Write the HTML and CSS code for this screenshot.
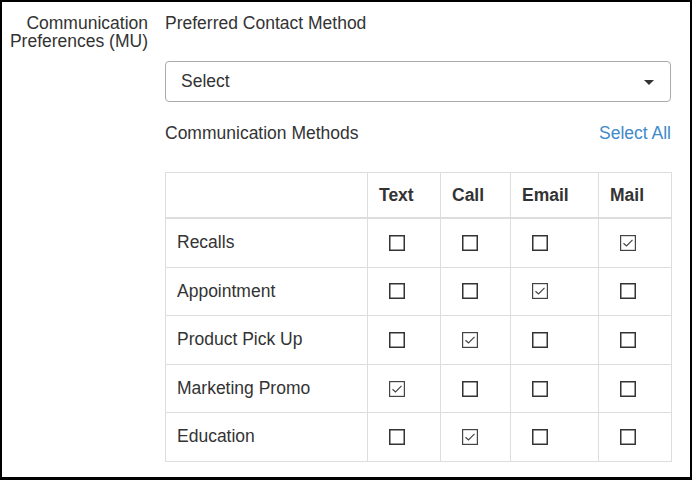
FILE: index.html
```html
<!DOCTYPE html>
<html lang="en">
<head>
<meta charset="utf-8">
<title>Communication Preferences</title>
<link rel="stylesheet" href="styles.css">
</head>
<body>
<div class="frame">
  <div class="form-row">
    <div class="row-label">Communication<br>Preferences (MU)</div>
    <div class="field">
      <div class="field-title">Preferred Contact Method</div>
      <div class="select">
        <span>Select</span>
        <span class="caret"></span>
      </div>
      <div class="methods-head">
        <span>Communication Methods</span>
        <a class="select-all" href="#">Select All</a>
      </div>
      <table class="methods">
        <colgroup>
          <col class="c-name"><col class="c-text"><col class="c-call"><col class="c-email"><col class="c-mail">
        </colgroup>
        <thead>
          <tr><th></th><th>Text</th><th>Call</th><th>Email</th><th>Mail</th></tr>
        </thead>
        <tbody>
          <tr>
            <td>Recalls</td>
            <td class="chk"><svg class="box" viewBox="0 0 16 16"><rect x="0.75" y="0.75" width="14.5" height="14.5"/></svg></td>
            <td class="chk"><svg class="box" viewBox="0 0 16 16"><rect x="0.75" y="0.75" width="14.5" height="14.5"/></svg></td>
            <td class="chk"><svg class="box" viewBox="0 0 16 16"><rect x="0.75" y="0.75" width="14.5" height="14.5"/></svg></td>
            <td class="chk"><svg class="box checked" viewBox="0 0 16 16"><rect x="0.6" y="0.6" width="14.8" height="14.8"/><polyline points="3.5,8.2 6.5,11 12.5,4.8"/></svg></td>
          </tr>
          <tr>
            <td>Appointment</td>
            <td class="chk"><svg class="box" viewBox="0 0 16 16"><rect x="0.75" y="0.75" width="14.5" height="14.5"/></svg></td>
            <td class="chk"><svg class="box" viewBox="0 0 16 16"><rect x="0.75" y="0.75" width="14.5" height="14.5"/></svg></td>
            <td class="chk"><svg class="box checked" viewBox="0 0 16 16"><rect x="0.6" y="0.6" width="14.8" height="14.8"/><polyline points="3.5,8.2 6.5,11 12.5,4.8"/></svg></td>
            <td class="chk"><svg class="box" viewBox="0 0 16 16"><rect x="0.75" y="0.75" width="14.5" height="14.5"/></svg></td>
          </tr>
          <tr>
            <td>Product Pick Up</td>
            <td class="chk"><svg class="box" viewBox="0 0 16 16"><rect x="0.75" y="0.75" width="14.5" height="14.5"/></svg></td>
            <td class="chk"><svg class="box checked" viewBox="0 0 16 16"><rect x="0.6" y="0.6" width="14.8" height="14.8"/><polyline points="3.5,8.2 6.5,11 12.5,4.8"/></svg></td>
            <td class="chk"><svg class="box" viewBox="0 0 16 16"><rect x="0.75" y="0.75" width="14.5" height="14.5"/></svg></td>
            <td class="chk"><svg class="box" viewBox="0 0 16 16"><rect x="0.75" y="0.75" width="14.5" height="14.5"/></svg></td>
          </tr>
          <tr>
            <td>Marketing Promo</td>
            <td class="chk"><svg class="box checked" viewBox="0 0 16 16"><rect x="0.6" y="0.6" width="14.8" height="14.8"/><polyline points="3.5,8.2 6.5,11 12.5,4.8"/></svg></td>
            <td class="chk"><svg class="box" viewBox="0 0 16 16"><rect x="0.75" y="0.75" width="14.5" height="14.5"/></svg></td>
            <td class="chk"><svg class="box" viewBox="0 0 16 16"><rect x="0.75" y="0.75" width="14.5" height="14.5"/></svg></td>
            <td class="chk"><svg class="box" viewBox="0 0 16 16"><rect x="0.75" y="0.75" width="14.5" height="14.5"/></svg></td>
          </tr>
          <tr>
            <td>Education</td>
            <td class="chk"><svg class="box" viewBox="0 0 16 16"><rect x="0.75" y="0.75" width="14.5" height="14.5"/></svg></td>
            <td class="chk"><svg class="box checked" viewBox="0 0 16 16"><rect x="0.6" y="0.6" width="14.8" height="14.8"/><polyline points="3.5,8.2 6.5,11 12.5,4.8"/></svg></td>
            <td class="chk"><svg class="box" viewBox="0 0 16 16"><rect x="0.75" y="0.75" width="14.5" height="14.5"/></svg></td>
            <td class="chk"><svg class="box" viewBox="0 0 16 16"><rect x="0.75" y="0.75" width="14.5" height="14.5"/></svg></td>
          </tr>
        </tbody>
      </table>
    </div>
  </div>
</div>
</body>
</html>
```

FILE: styles.css
```css
html, body {
  margin: 0;
  padding: 0;
  background: #fff;
}

body {
  font-family: "Liberation Sans", Arial, sans-serif;
  font-size: 17.5px;
  color: #333;
}

.frame {
  box-sizing: border-box;
  width: 692px;
  height: 480px;
  border: 2px solid #000;
  border-bottom-width: 3px;
  padding-top: 12px;
  overflow: hidden;
}

.form-row {
  display: grid;
  grid-template-columns: 146px 506px;
  column-gap: 17px;
}

.row-label {
  text-align: right;
  line-height: 18px;
}

.field-title {
  line-height: 18px;
}

.select {
  box-sizing: border-box;
  height: 41px;
  margin-top: 29px;
  border: 1px solid #aaa;
  border-radius: 4px;
  padding: 0 16px 0 15px;
  display: flex;
  align-items: center;
  justify-content: space-between;
}

.caret {
  width: 0;
  height: 0;
  border-left: 5px solid transparent;
  border-right: 5px solid transparent;
  border-top: 5px solid #333;
  margin-top: 1px;
}

.methods-head {
  margin-top: 22px;
  line-height: 18px;
  display: flex;
  justify-content: space-between;
}

.select-all {
  color: #428bca;
  text-decoration: none;
}

.methods {
  margin-top: 30px;
  width: 506px;
  table-layout: fixed;
  border-collapse: collapse;
  border: 1px solid #ddd;
}

.c-name { width: 202px; }
.c-text { width: 73px; }
.c-call { width: 70px; }
.c-email { width: 88px; }
.c-mail { width: 73px; }

.methods th,
.methods td {
  border: 1px solid #ddd;
  text-align: left;
  padding: 12px 11px;
  line-height: 23.6px;
  vertical-align: middle;
}

.methods th {
  padding-top: 10px;
  padding-bottom: 10px;
  line-height: 24px;
  font-weight: bold;
  border-bottom-width: 2px;
}

.methods td.chk {
  padding-left: 21px;
}

.box {
  display: block;
  width: 16px;
  height: 16px;
}

.box rect {
  fill: #fff;
  stroke: #333;
  stroke-width: 1.5;
}

.box.checked rect {
  stroke: #444;
  stroke-width: 1.2;
}

.box.checked polyline {
  fill: none;
  stroke: #444;
  stroke-width: 1.2;
}
```
